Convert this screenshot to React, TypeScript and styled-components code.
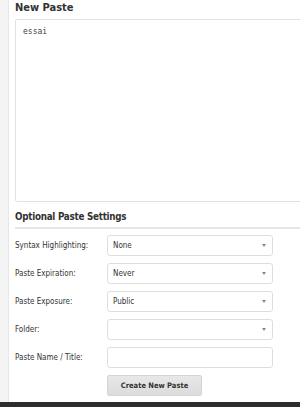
import React from 'react'
import styled, { createGlobalStyle } from 'styled-components'

const GlobalStyle = createGlobalStyle`
    html, body {
        margin: 0;
        padding: 0;
        background: #ffffff;
        overflow: hidden;
    }
    body {
        font-family: "DejaVu Sans Condensed", "DejaVu Sans", Verdana, sans-serif;
        color: #333333;
    }
`;

const Page = styled.div`
    width: 300px;
    height: 407px;
    display: flex;
    flex-direction: column;
`;

const Body = styled.div`
    display: flex;
    flex: 1;
`;

const Strip = styled.div`
    width: 8px;
    background: #f4f4f4;
    border-right: 1px solid #e7e7e7;
`;

const Main = styled.main`
    flex: 1;
    padding-left: 6px;
    display: flex;
    flex-direction: column;
    min-width: 0;
`;

const Heading = styled.h2`
    margin: 0;
    font-size: 11px;
    font-weight: bold;
    color: #333;
    line-height: 14px;
    padding-top: 1px;
`;

const PasteArea = styled.textarea`
    display: block;
    box-sizing: border-box;
    margin-top: 4px;
    width: 320px;
    height: 183px;
    border: 1px solid #e2e2e2;
    border-radius: 2px;
    padding: 7px 7px;
    resize: none;
    font-family: "DejaVu Sans Mono", "Liberation Mono", monospace;
    font-size: 8px;
    line-height: 10px;
    color: #444;
    outline: none;
`;

const SectionTitle = styled.h3`
    margin: 8px 0 0 0;
    font-size: 9.75px;
    letter-spacing: -0.25px;
    font-weight: bold;
    color: #333;
    line-height: 14px;
    padding-bottom: 3px;
    border-bottom: 2px solid #e6e6e6;
`;

const Form = styled.div`
    display: grid;
    grid-template-columns: 92px 166px;
    grid-auto-rows: 21px;
    row-gap: 7px;
    margin-top: 6px;
    align-items: center;
`;

const Label = styled.label`
    font-size: 8px;
    color: #333;
`;

const SelectBox = styled.div`
    position: relative;
    height: 21px;
    box-sizing: border-box;
    border: 1px solid #dedede;
    border-radius: 3px;
    background: #fff;
    display: flex;
    align-items: center;
    padding-left: 5px;
    font-size: 8px;
    color: #333;
    &::after {
        content: "";
        position: absolute;
        right: 6px;
        top: 8px;
        border-left: 2.5px solid transparent;
        border-right: 2.5px solid transparent;
        border-top: 3px solid #888;
    }
`;

const TextInput = styled.div`
    height: 21px;
    box-sizing: border-box;
    border: 1px solid #dedede;
    border-radius: 3px;
    background: #fff;
`;

const Button = styled.button`
    grid-column: 2;
    justify-self: start;
    width: 95px;
    height: 21px;
    border: 1px solid #d4d4d4;
    border-radius: 2px;
    background: linear-gradient(#e8e8e8, #dcdcdc);
    font-family: inherit;
    font-size: 7.5px;
    font-weight: bold;
    color: #333;
    padding: 0;
`;

const Footer = styled.div`
    height: 5px;
    background: #2d2d2d;
`;

const selects = [
    { label: 'Syntax Highlighting:', value: 'None' },
    { label: 'Paste Expiration:', value: 'Never' },
    { label: 'Paste Exposure:', value: 'Public' },
    { label: 'Folder:', value: '' },
]

function App() {
    return (
        <Page>
            <GlobalStyle />
            <Body>
                <Strip />
                <Main>
                    <Heading>New Paste</Heading>
                    <PasteArea defaultValue="essai" spellCheck={false} />
                    <SectionTitle>Optional Paste Settings</SectionTitle>
                    <Form>
                        {selects.map((s) => (
                            <React.Fragment key={s.label}>
                                <Label>{s.label}</Label>
                                <SelectBox>{s.value}</SelectBox>
                            </React.Fragment>
                        ))}
                        <Label>Paste Name / Title:</Label>
                        <TextInput />
                        <Button>Create New Paste</Button>
                    </Form>
                </Main>
            </Body>
            <Footer />
        </Page>
    )
}

export default App
